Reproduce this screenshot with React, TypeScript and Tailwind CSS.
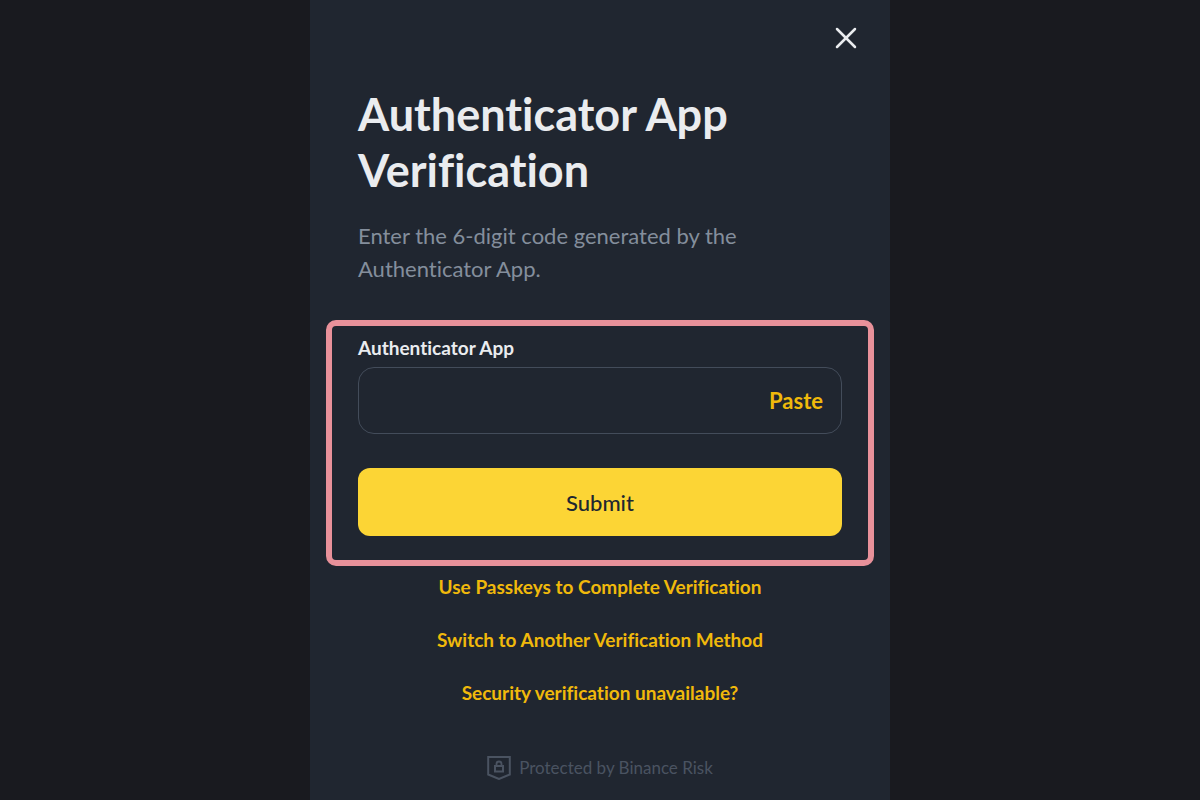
import { X } from "lucide-react";

const links = [
  "Use Passkeys to Complete Verification",
  "Switch to Another Verification Method",
  "Security verification unavailable?",
];

function ShieldLock() {
  return (
    <svg className="size-6 shrink-0" viewBox="0 0 24 24" fill="none" stroke="currentColor" strokeWidth={2} aria-hidden="true">
      <path d="M1.2 1h21.6v17.5L12 23 1.2 18.5z" />
      <path d="M9.5 10V8a2.5 2.5 0 0 1 5 0v2" strokeWidth={1.8} />
      <path d="M8 10h8v5.500H8z" />
    </svg>
  );
}

export default function App() {
  return (
    <div className="min-h-screen bg-[#191a1f] font-['Lato',sans-serif] [font-variant-ligatures:no-common-ligatures]">
      <main className="mx-auto flex min-h-screen w-full max-w-[580px] flex-col bg-[#202630] px-4">
        <div className="flex justify-end pt-5 pr-2.5">
          <button type="button" aria-label="Close" className="text-[#eaecef]">
            <X className="size-9" strokeWidth={1.7} />
          </button>
        </div>

        <div className="px-8">
          <h1 className="mt-[30px] text-[45px] leading-14 font-bold text-[#eaecef]">
            Authenticator App Verification
          </h1>
          <p className="mt-[21px] text-[22px] leading-[33px] text-[#848e9c]">
            Enter the 6-digit code generated by the Authenticator App.
          </p>
        </div>

        {/* highlighted form */}
        <form
          className="mt-[35px] rounded-[10px] border-6 border-[#e8919a] px-[26px] pt-2 pb-6"
          onSubmit={(e) => e.preventDefault()}
        >
          <label htmlFor="code" className="block text-[19px] leading-7 font-bold text-[#eaecef]">
            Authenticator App
          </label>
          <div className="mt-[5px] flex h-[67px] items-center rounded-2xl border border-[#434c5a] pr-[18px]">
            <input
              id="code"
              type="text"
              inputMode="numeric"
              maxLength={6}
              className="h-full min-w-0 flex-1 bg-transparent px-4 text-[22px] text-[#eaecef] outline-none"
            />
            <button type="button" className="text-[22px] font-bold text-[#f0b90b]">
              Paste
            </button>
          </div>
          <button
            type="submit"
            className="mt-[34px] h-17 w-full rounded-xl bg-[#fcd535] text-[22px] font-medium text-[#202630]"
          >
            Submit
          </button>
        </form>

        <nav className="mt-[7px] flex flex-col items-center gap-[25px]">
          {links.map((text) => (
            <a key={text} href="#" className="text-[19px] leading-7 font-bold text-[#f0b90b]">
              {text}
            </a>
          ))}
        </nav>

        <footer className="mt-auto flex items-center justify-center gap-2 pb-5 text-[17px] leading-6 text-[#4a5361]">
          <ShieldLock />
          Protected by Binance Risk
        </footer>
      </main>
    </div>
  );
}
